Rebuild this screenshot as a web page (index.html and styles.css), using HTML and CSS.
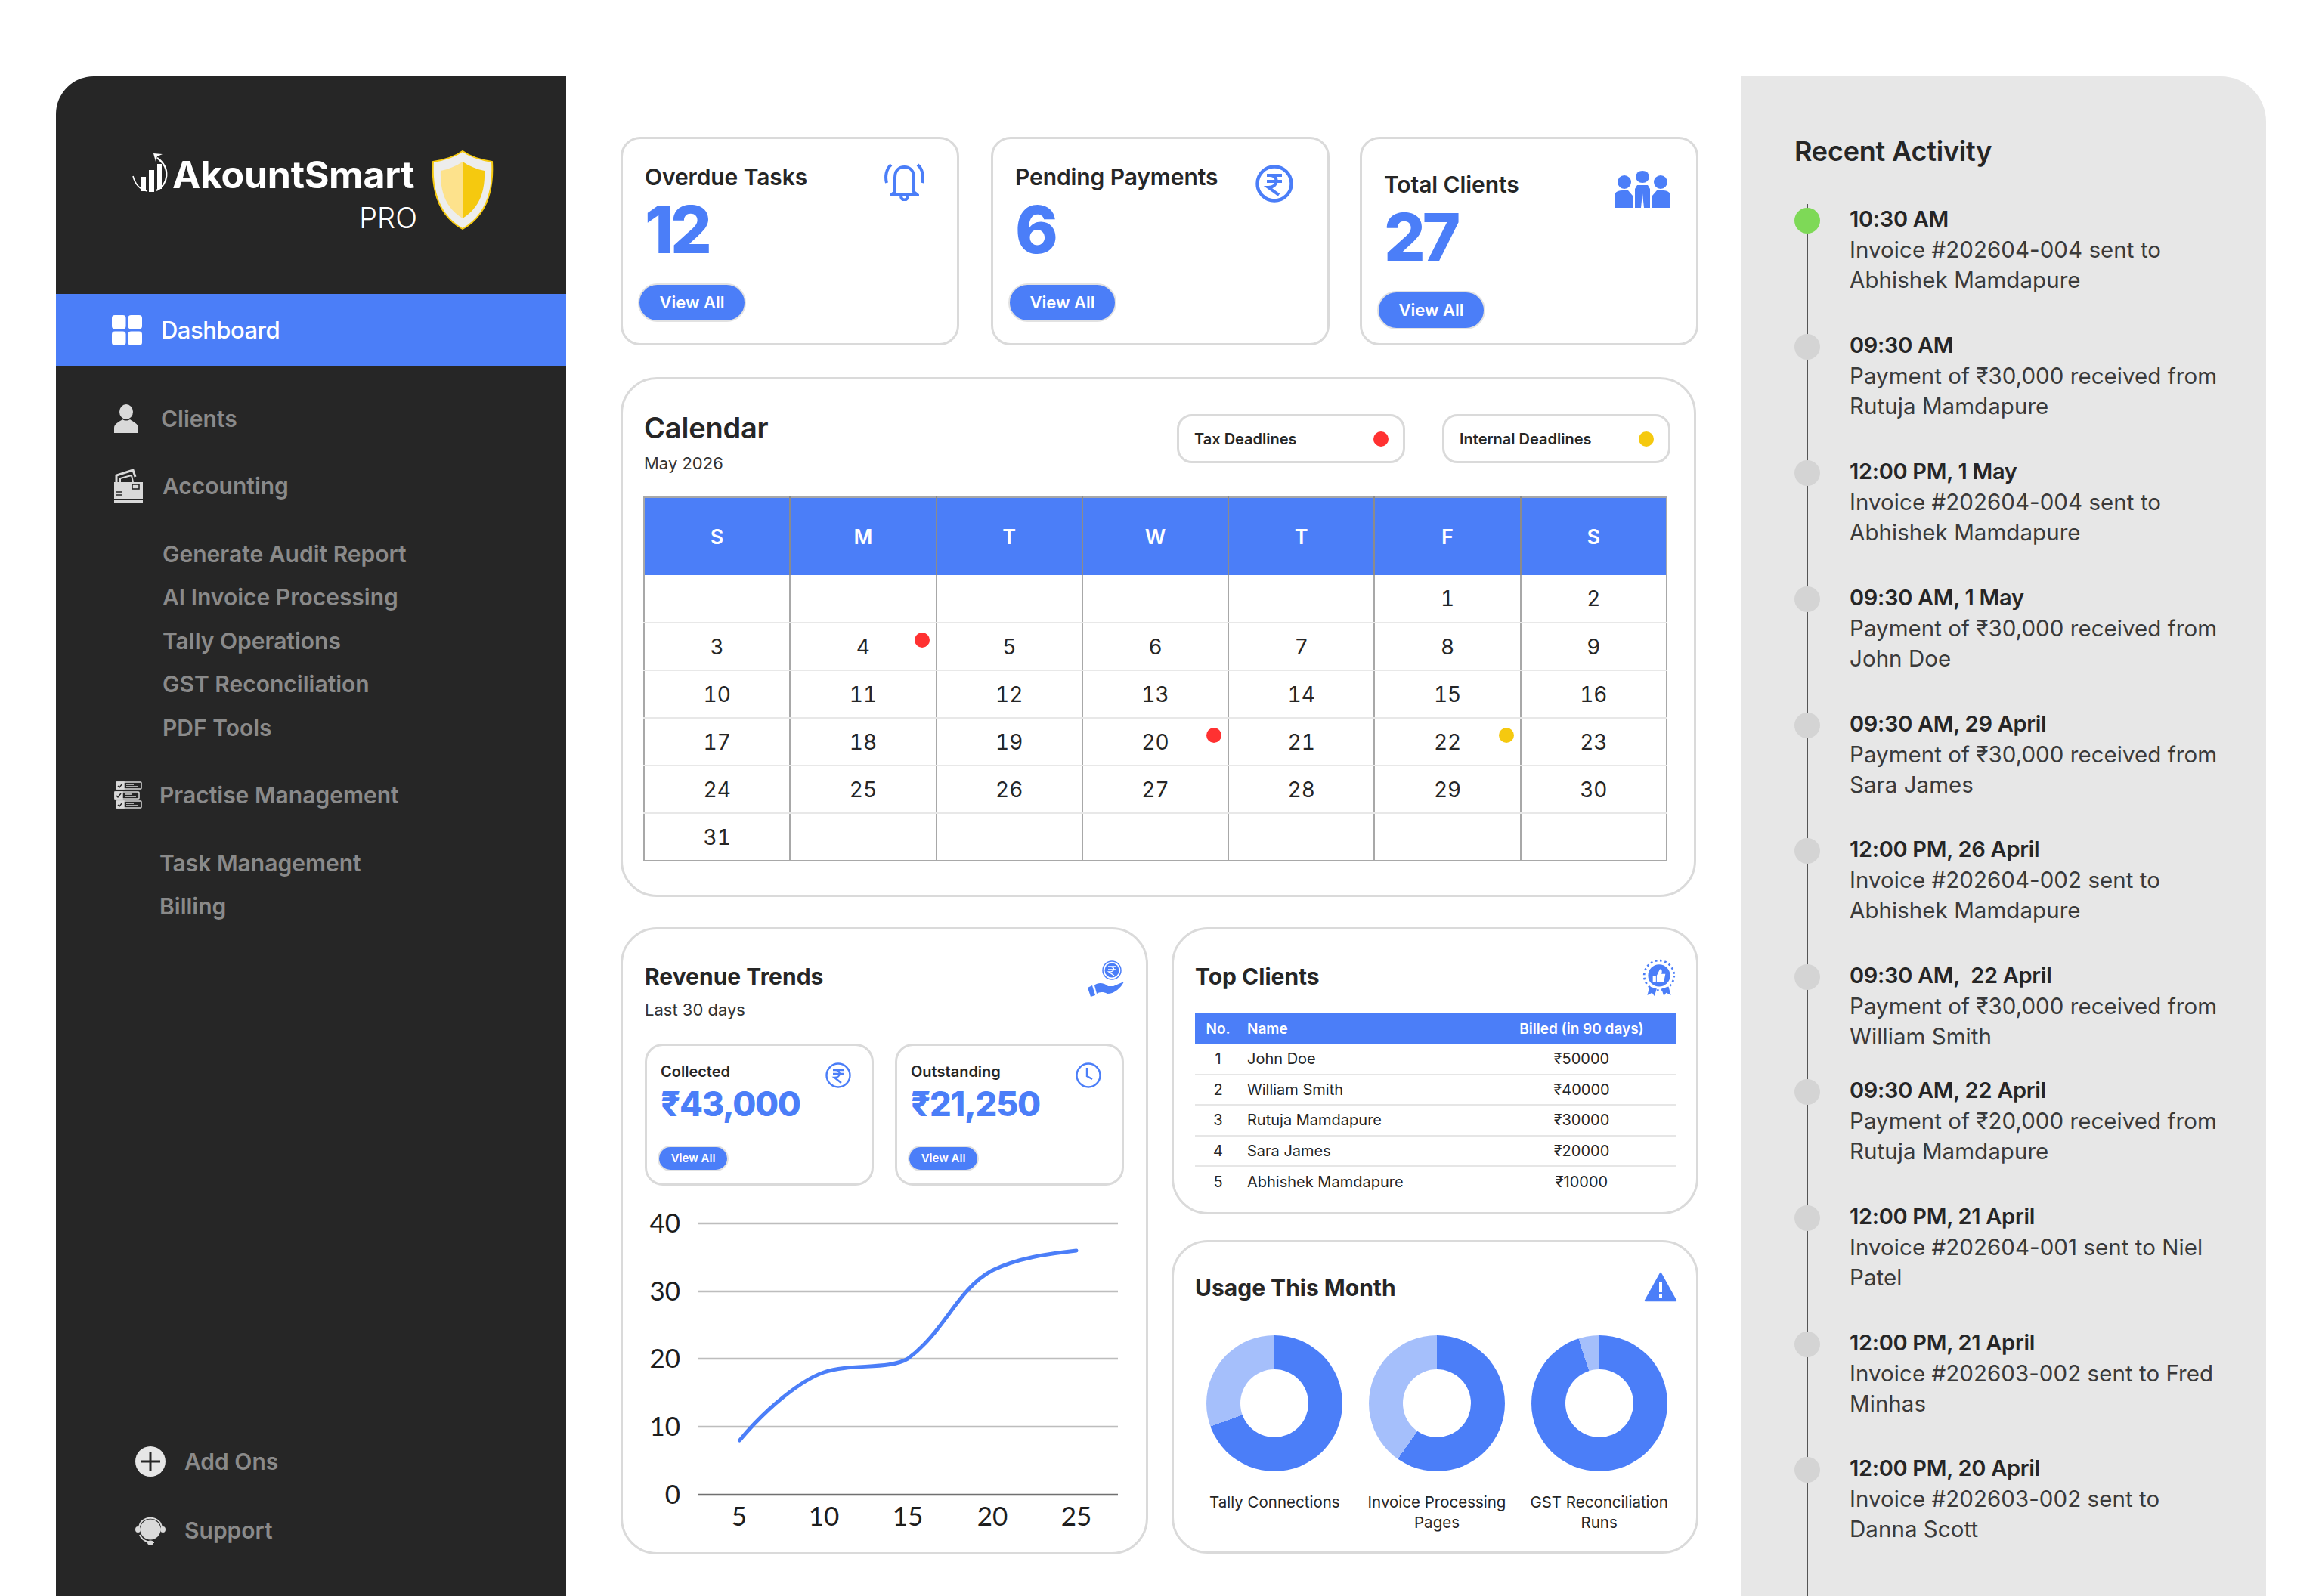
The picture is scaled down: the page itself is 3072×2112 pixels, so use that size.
FILE: index.html
```html
<!DOCTYPE html>
<html lang="en">
<head>
<meta charset="utf-8">
<title>AkountSmart PRO</title>
<link rel="stylesheet" href="styles.css">
</head>
<body>
<div class="app">
  <aside class="sidebar">
    <div class="brand">
      <svg class="brand-mark" viewBox="0 0 50 52" fill="none">
        <path d="M1 30C4 42 11 48 20 50" stroke="#fff" stroke-width="1.6"/>
        <rect x="12" y="31" width="6" height="19" fill="#fff"/><rect x="22" y="22" width="7" height="29" fill="#fff"/><rect x="33" y="14" width="6" height="33" fill="#fff"/>
        <path d="M32 49C47 42 52 20 33 6" stroke="#fff" stroke-width="2.2"/>
        <path d="M28 0L40 1L33 4L31 11Z" fill="#fff"/>
      </svg>
      <div class="brand-text">
        <div class="brand-name">AkountSmart</div>
        <div class="brand-tier">PRO</div>
      </div>
      <svg class="brand-shield" viewBox="0 0 82 105">
        <path d="M41 1C30 9 15 13 2 15C0 50 7 85 41 104C75 85 82 50 80 15C67 13 52 9 41 1Z" fill="#ededed" stroke="#f5c90f" stroke-width="2"/>
        <path d="M41 15C32 21 22 25 12 27C11 53 18 76 41 90Z" fill="#fde28c"/>
        <path d="M41 15C50 21 60 25 70 27C71 53 64 76 41 90Z" fill="#f5c90f"/>
      </svg>
    </div>
    <div class="nav-active">
      <svg class="ico-dash" viewBox="0 0 40 40" fill="#fff"><rect width="18.5" height="18.5" rx="4"/><rect x="21.5" width="18.5" height="18.5" rx="4"/><rect y="21.5" width="18.5" height="18.5" rx="4"/><rect x="21.5" y="21.5" width="18.5" height="18.5" rx="4"/></svg>
      <span>Dashboard</span>
    </div>
    <nav class="nav">
      <div class="nav-row"><svg class="ico-client" viewBox="0 0 32 38" fill="#d9d9d9"><ellipse cx="16" cy="10" rx="9" ry="10"/><path d="M0 38V31C0 26 7 23 11 20C14 22 18 22 21 20C25 23 32 26 32 31V38Z"/></svg><span>Clients</span></div>
      <div class="nav-row nav-row-acc"><svg class="ico-acc" viewBox="0 0 38 44"><path d="M3 17V8L25 1L28 10" fill="none" stroke="#d9d9d9" stroke-width="3"/><path d="M8 17V12L23 8L25 17" fill="#262626" stroke="#d9d9d9" stroke-width="2"/><rect y="17" width="38" height="22" fill="#d9d9d9"/><rect x="24" y="20" width="9" height="6" fill="#d9d9d9" stroke="#262626" stroke-width="1.6"/><path d="M3 30H11M3 34H11" stroke="#262626" stroke-width="1.6"/><rect y="41" width="38" height="3" fill="#d9d9d9"/></svg><span>Accounting</span></div>
      <div class="nav-group nav-sub">
        <div class="nav-row">Generate Audit Report</div>
        <div class="nav-row">AI Invoice Processing</div>
        <div class="nav-row">Tally Operations</div>
        <div class="nav-row">GST Reconciliation</div>
        <div class="nav-row">PDF Tools</div>
      </div>
      <div class="nav-row nav-row-pm"><svg class="ico-pm" viewBox="0 0 37 36" fill="none" stroke="#d9d9d9" stroke-width="1.5"><rect x="3" y="1" width="33" height="9" rx="1"/><rect x="1" y="14" width="32" height="9" rx="1"/><rect x="3" y="26" width="33" height="9" rx="1"/><path d="M3 1H13V10H3ZM1 14H11V23H1ZM3 26H13V35H3Z" fill="#d9d9d9"/><path d="M5 6L7 8L11 3M3 19L5 21L9 16M5 31L7 33L11 28" stroke="#262626"/><path d="M16 4H26M16 7H32M14 17H24M14 20H29M16 29H26M16 32H32"/></svg><span>Practise Management</span></div>
      <div class="nav-group nav-sub nav-sub-pm">
        <div class="nav-row">Task Management</div>
        <div class="nav-row">Billing</div>
      </div>
    </nav>
    <div class="nav-bottom">
      <div class="nav-row nav-row-end"><svg class="ico-end" viewBox="0 0 40 40"><circle cx="20" cy="20" r="20" fill="#e6e6e6"/><path d="M20 7V33M7 20H33" stroke="#262626" stroke-width="3"/></svg><span>Add Ons</span></div>
      <div class="nav-row nav-row-end"><svg class="ico-end" viewBox="0 0 40 40"><circle cx="20" cy="19" r="13.5" fill="#d9d9d9"/><path d="M5 18C5 -1 35 -1 35 18M6 26C10 36 20 36 25 36" fill="none" stroke="#d9d9d9" stroke-width="2"/><ellipse cx="3.5" cy="19" rx="3.5" ry="4" fill="#d9d9d9"/><ellipse cx="36.5" cy="19" rx="3.5" ry="4" fill="#d9d9d9"/><ellipse cx="20" cy="36.5" rx="4" ry="3" fill="#d9d9d9"/></svg><span>Support</span></div>
    </div>
  </aside>

  <main class="main">
    <section class="stats">
      <article class="card stat">
        <div class="stat-head"><h3>Overdue Tasks</h3>
          <svg class="ico-bell" viewBox="0 0 55 50" fill="none" stroke="#4b7ef8" stroke-width="4"><path d="M15 38V19C15 10 20 5 27.5 5C35 5 40 10 40 19V38L45 42H10Z" stroke-linejoin="round"/><path d="M23 44C24 50 31 50 32 44M10 2C3 8 2 18 4 26M45 2C52 8 53 18 51 26"/></svg></div>
        <div class="stat-num">12</div>
        <a class="btn">View All</a>
      </article>
      <article class="card stat">
        <div class="stat-head"><h3>Pending Payments</h3>
          <svg class="ico-rupee" viewBox="0 0 50 50" fill="none" stroke="#4b7ef8"><circle cx="25" cy="25" r="22.5" stroke-width="4.4"/><path d="M15 14H35M15 22H35M19 14C31 14 31 30 17 30L31 40" stroke-width="4"/></svg></div>
        <div class="stat-num">6</div>
        <a class="btn">View All</a>
      </article>
      <article class="card stat stat-low">
        <div class="stat-head"><h3>Total Clients</h3>
          <svg class="ico-people" viewBox="0 0 74 49" fill="#4b7ef8"><ellipse cx="37" cy="8" rx="9" ry="8"/><ellipse cx="13" cy="15" rx="9" ry="9"/><ellipse cx="61" cy="15" rx="9" ry="9"/><path d="M0 49V33C0 28 5 26 10 26H18L24 33V49ZM74 49V33C74 28 69 26 64 26H56L50 33V49ZM27 49V24L30 19H44L47 24V49H39L37 30L35 49Z"/></svg></div>
        <div class="stat-num">27</div>
        <a class="btn">View All</a>
      </article>
    </section>

    <section class="card calendar">
      <div class="cal-head">
        <div><h2>Calendar</h2><p class="muted">May 2026</p></div>
        <div class="legends">
          <div class="legend">Tax Deadlines<i class="dot dot-red"></i></div>
          <div class="legend">Internal Deadlines<i class="dot dot-yellow"></i></div>
        </div>
      </div>
      <table class="cal-table">
        <thead><tr><th>S</th><th>M</th><th>T</th><th>W</th><th>T</th><th>F</th><th>S</th></tr></thead>
        <tbody>
          <tr><td></td><td></td><td></td><td></td><td></td><td>1</td><td>2</td></tr>
          <tr><td>3</td><td>4<i class="dot dot-red cal-mark"></i></td><td>5</td><td>6</td><td>7</td><td>8</td><td>9</td></tr>
          <tr><td>10</td><td>11</td><td>12</td><td>13</td><td>14</td><td>15</td><td>16</td></tr>
          <tr><td>17</td><td>18</td><td>19</td><td>20<i class="dot dot-red cal-mark"></i></td><td>21</td><td>22<i class="dot dot-yellow cal-mark"></i></td><td>23</td></tr>
          <tr><td>24</td><td>25</td><td>26</td><td>27</td><td>28</td><td>29</td><td>30</td></tr>
          <tr><td>31</td><td></td><td></td><td></td><td></td><td></td><td></td></tr>
        </tbody>
      </table>
    </section>

    <section class="lower">
      <article class="card revenue">
        <div class="rev-head">
          <div><h2 class="h-md">Revenue Trends</h2><p class="muted">Last 30 days</p></div>
          <svg class="ico-hand" viewBox="0 0 50 48"><circle cx="32" cy="13" r="12" fill="#fff" stroke="#4b7ef8" stroke-width="1.5"/><circle cx="32" cy="13" r="9.5" fill="#4b7ef8"/><path d="M27 8H37M27 12H37M29 8C37 8 36 15 28 15L35 20" fill="none" stroke="#fff" stroke-width="1.5"/><path d="M0 36L6 33L10 46L4 48ZM9 33C14 28 22 30 27 34H34L48 28C44 36 36 44 26 44C20 41 15 42 12 44Z" fill="#4b7ef8"/></svg>
        </div>
        <div class="minis">
          <div class="mini">
            <div class="mini-head"><h4>Collected</h4><svg class="ico-mini" viewBox="0 0 34 34" fill="none" stroke="#4b7ef8"><circle cx="17" cy="17" r="15.5" stroke-width="2.4"/><path d="M10 10H24M10 15H24M13 10C21 10 21 20 12 20L21 27" stroke-width="2.4"/></svg></div>
            <div class="mini-val">₹43,000</div>
            <a class="btn btn-sm">View All</a>
          </div>
          <div class="mini">
            <div class="mini-head"><h4>Outstanding</h4><svg class="ico-mini" viewBox="0 0 34 34" fill="none" stroke="#4b7ef8" stroke-width="2.4"><circle cx="17" cy="17" r="15.5"/><path d="M15 7V18L22 22"/></svg></div>
            <div class="mini-val">₹21,250</div>
            <a class="btn btn-sm">View All</a>
          </div>
        </div>
        <svg class="chart" viewBox="850 1590 660 440">
          <g stroke="#bdbdbd" stroke-width="2.4"><path d="M922 1618H1478M922 1708H1478M922 1797H1478M922 1887H1478"/></g>
          <path d="M922 1977H1478" stroke="#707070" stroke-width="2.4"/>
          <g class="chart-txt" text-anchor="end"><text x="899" y="1630">40</text><text x="899" y="1720">30</text><text x="899" y="1809">20</text><text x="899" y="1899">10</text><text x="899" y="1989">0</text></g>
          <g class="chart-txt" text-anchor="middle"><text x="977" y="2018">5</text><text x="1089" y="2018">10</text><text x="1200" y="2018">15</text><text x="1312" y="2018">20</text><text x="1423" y="2018">25</text></g>
          <path d="M977.5 1905C1015 1860 1060 1825 1089 1815C1125 1803 1175 1812 1200 1797C1250 1760 1265 1705 1312 1680C1345 1664 1385 1658 1423 1654" fill="none" stroke="#4b7ef8" stroke-width="5" stroke-linecap="round"/>
        </svg>
      </article>
      <div class="right-col">
        <article class="card clients">
          <div class="sec-head sec-head-tbl"><h2 class="h-md">Top Clients</h2>
            <svg class="ico-badge" viewBox="0 0 48 48"><circle cx="24" cy="21" r="19" fill="none" stroke="#4b7ef8" stroke-width="2.6" stroke-dasharray="2.5 3.5"/><circle cx="24" cy="21" r="14" fill="#4b7ef8"/><path d="M16 21H20V29H16ZM21 21L25 13C28 13 28 16 27 19H32L30 29H21Z" fill="#fff"/><path d="M12 35L9 46L15 43L18 47L21 38ZM36 35L39 46L33 43L30 47L27 38Z" fill="#4b7ef8"/></svg></div>
          <table class="client-table">
            <thead><tr><th>No.</th><th>Name</th><th>Billed (in 90 days)</th></tr></thead>
            <tbody>
              <tr><td>1</td><td>John Doe</td><td>₹50000</td></tr>
              <tr><td>2</td><td>William Smith</td><td>₹40000</td></tr>
              <tr><td>3</td><td>Rutuja Mamdapure</td><td>₹30000</td></tr>
              <tr><td>4</td><td>Sara James</td><td>₹20000</td></tr>
              <tr><td>5</td><td>Abhishek Mamdapure</td><td>₹10000</td></tr>
            </tbody>
          </table>
        </article>
        <article class="card usage">
          <div class="sec-head"><h2 class="h-md">Usage This Month</h2>
            <svg class="ico-warn" viewBox="0 0 44 40"><path d="M22 2L42 38H2Z" fill="#4b7ef8" stroke="#4b7ef8" stroke-width="2.5" stroke-linejoin="round"/><path d="M22 13V27M22 30V35" stroke="#fff" stroke-width="4"/></svg></div>
          <div class="donuts">
            <figure class="donut-item"><div class="donut" style="--p:250deg"></div><figcaption>Tally Connections</figcaption></figure>
            <figure class="donut-item"><div class="donut" style="--p:215deg"></div><figcaption>Invoice Processing Pages</figcaption></figure>
            <figure class="donut-item"><div class="donut" style="--p:342deg"></div><figcaption>GST Reconciliation Runs</figcaption></figure>
          </div>
        </article>
      </div>
    </section>
  </main>

  <aside class="activity">
    <h2 class="act-title">Recent Activity</h2>
    <ul class="act-list">
      <li class="act-item act-now"><b>10:30 AM</b>Invoice #202604-004 sent to<br>Abhishek Mamdapure</li>
      <li class="act-item"><b>09:30 AM</b>Payment of ₹30,000 received from<br>Rutuja Mamdapure</li>
      <li class="act-item"><b>12:00 PM, 1 May</b>Invoice #202604-004 sent to<br>Abhishek Mamdapure</li>
      <li class="act-item"><b>09:30 AM, 1 May</b>Payment of ₹30,000 received from<br>John Doe</li>
      <li class="act-item"><b>09:30 AM, 29 April</b>Payment of ₹30,000 received from<br>Sara James</li>
      <li class="act-item"><b>12:00 PM, 26 April</b>Invoice #202604-002 sent to<br>Abhishek Mamdapure</li>
      <li class="act-item act-tight"><b>09:30 AM,&nbsp; 22 April</b>Payment of ₹30,000 received from<br>William Smith</li>
      <li class="act-item"><b>09:30 AM, 22 April</b>Payment of ₹20,000 received from<br>Rutuja Mamdapure</li>
      <li class="act-item"><b>12:00 PM, 21 April</b>Invoice #202604-001 sent to Niel<br>Patel</li>
      <li class="act-item"><b>12:00 PM, 21 April</b>Invoice #202603-002 sent to Fred<br>Minhas</li>
      <li class="act-item"><b>12:00 PM, 20 April</b>Invoice #202603-002 sent to<br>Danna Scott</li>
    </ul>
  </aside>
</div>
</body>
</html>
```
FILE: styles.css
```css
* { box-sizing: border-box; }
html, body { margin: 0; padding: 0; background: #fff; }
body { font-family: Inter, "Noto Sans", sans-serif; color: #262626; }
h2, h3, h4, p, ul, figure { margin: 0; padding: 0; }
svg { display: block; flex: none; }

.app { width: 3072px; height: 2112px; padding: 101px 74px 0; display: flex; overflow: hidden; }

/* sidebar */
.sidebar { width: 675px; flex: none; background: #262626; border-radius: 50px 0 0 0; display: flex; flex-direction: column; color: #8a8a8a; font-weight: 600; font-size: 30px; }
.brand { height: 288px; padding: 98px 0 0 101px; display: flex; align-items: flex-start; }
.brand-mark { width: 50px; height: 52px; margin: 4px 3px 0 0; }
.brand-text { width: 324px; text-align: right; color: #fff; padding-top: 2px; }
.brand-name { font-size: 50px; font-weight: 700; line-height: 60px; letter-spacing: -0.3px; text-align: left; }
.brand-tier { font-size: 38px; font-weight: 300; line-height: 50px; margin-top: 2px; }
.brand-shield { width: 82px; height: 105px; margin-left: 19px; }
.nav-active { height: 95px; background: #4b7ef8; color: #fff; display: flex; align-items: center; padding-left: 74px; font-weight: 500; font-size: 31px; letter-spacing: -0.5px; }
.ico-dash { width: 40px; height: 40px; margin-right: 25px; }
.nav { margin-top: 41px; display: flex; flex-direction: column; gap: 32px; }
.nav-group { display: flex; flex-direction: column; }
.nav-row { height: 57.5px; display: flex; align-items: center; padding-left: 77px; }
.nav-sub .nav-row { padding-left: 141px; }
.nav-sub-pm .nav-row { padding-left: 137px; }
.ico-client { width: 32px; height: 38px; margin-right: 30px; }
.ico-acc { width: 38px; height: 44px; margin-right: 26px; }
.ico-pm { width: 37px; height: 36px; margin-right: 23px; }
.nav-bottom { margin-top: auto; padding-bottom: 58px; display: flex; flex-direction: column; gap: 34px; }
.nav-row-end { padding-left: 105px; }
.ico-end { width: 40px; height: 40px; margin-right: 25px; }

/* cards */
.main { width: 1426px; flex: none; margin-left: 72px; padding-top: 80px; display: flex; flex-direction: column; gap: 42px; }
.card { background: #fff; border: 3px solid #dadada; border-radius: 48px; }
.stats { display: flex; gap: 42px; }
.stat { width: 448px; height: 276px; border-radius: 26px; padding: 32px 44px 28px 29px; display: flex; flex-direction: column; align-items: flex-start; }
.stat-low { padding-top: 42px; padding-bottom: 18px; margin-left: -2px; }
.stat-head { width: 100%; height: 36px; display: flex; justify-content: space-between; align-items: flex-start; }
.stat-head h3 { font-size: 30px; font-weight: 600; line-height: 36px; letter-spacing: -0.1px; }
.stat-num { color: #4b7ef8; font-size: 86px; line-height: 92px; font-weight: 800; letter-spacing: -4px; margin-top: 6px; }
.ico-bell { width: 55px; height: 50px; margin: 0 -2px 0 0; }
.ico-rupee { width: 50px; height: 50px; margin: 2px 1px 0 0; }
.ico-people { width: 74px; height: 49px; margin-right: -10px; }
.btn { display: inline-block; width: 143px; height: 51px; line-height: 47px; margin: auto 0 0 -9px; background: #4b7ef8; color: #fff; border: 2px solid #e2e2e2; border-radius: 26px; text-align: center; font-size: 22px; font-weight: 600; }
.btn-sm { width: 94px; height: 34px; line-height: 29px; font-size: 15px; margin-left: -4px; }

/* calendar */
.calendar { height: 688px; padding: 41px 35px 0 27px; display: flex; flex-direction: column; margin-right: 3px; }
.cal-head { height: 114px; display: flex; justify-content: space-between; padding-left: 1px; }
h2 { font-size: 38px; line-height: 46px; font-weight: 600; letter-spacing: -0.2px; }
.muted { font-size: 22px; line-height: 30px; font-weight: 400; margin-top: 9px; color: #333; }
.legends { display: flex; gap: 49px; padding-top: 5px; margin-right: -4px; }
.legend { width: 302px; height: 65px; border: 3px solid #dadada; border-radius: 20px; display: flex; align-items: center; justify-content: space-between; padding: 0 19px 0 20px; font-size: 20px; font-weight: 600; }
.dot { display: block; width: 20px; height: 20px; border-radius: 50%; }
.dot-red { background: #ff3131; }
.dot-yellow { background: #f5c90f; }
.cal-table { width: 1355px; border-collapse: collapse; table-layout: fixed; border: 2px solid #a8a8a8; font-variant-numeric: tabular-nums; }
.cal-table th { height: 103px; background: #4b7ef8; color: #fff; font-size: 27px; font-weight: 600; border-right: 2px solid #8b8b8b; }
.cal-table td { position: relative; height: 63px; text-align: center; font-size: 28px; font-weight: 400; padding: 0; border-right: 2px solid #a8a8a8; border-bottom: 2px solid #e8e8e8; }
.cal-table tr:last-child td { border-bottom: 0; }
.cal-table th:last-child, .cal-table td:last-child { border-right: 0; }
.cal-mark { position: absolute; top: 12px; right: 8px; }

/* lower */
.lower { display: flex; justify-content: space-between; margin-top: -2px; }
.revenue { width: 698px; height: 830px; padding: 43px 29px 0 29px; }
.rev-head { display: flex; justify-content: space-between; height: 108px; }
.h-md { font-size: 30px; line-height: 38px; font-weight: 700; letter-spacing: 0; }
.revenue .muted { margin-top: 10px; }
.ico-hand { width: 52px; height: 48px; margin: -2px -3px 0 0; }
.minis { display: flex; justify-content: space-between; }
.mini { width: 303px; height: 188px; border: 3px solid #dadada; border-radius: 24px; padding: 22px 27px 0 18px; }
.mini-head { display: flex; justify-content: space-between; height: 24px; }
.mini-head h4 { font-size: 20px; line-height: 24px; font-weight: 600; }
.ico-mini { width: 34px; height: 34px; margin-top: 0; }
.mini-val { color: #4b7ef8; font-size: 45px; line-height: 52px; font-weight: 800; letter-spacing: -1.3px; margin-top: 5px; }
.mini .btn { margin-top: 29px; display: block; }
.chart { width: 660px; height: 440px; margin: 22px 0 0 -2px; }
.chart-txt { font-family: Lato, sans-serif; font-size: 35px; fill: #1d1d1d; }

.right-col { width: 697px; display: flex; flex-direction: column; gap: 34px; }
.clients { height: 380px; padding: 43px 27px 0 28px; }
.usage { height: 415px; padding: 41px 27px 0 28px; }
.sec-head { display: flex; justify-content: space-between; height: 72px; }
.sec-head-tbl { height: 68px; }
.ico-badge { width: 50px; height: 50px; margin: -4px -3px 0 0; }
.ico-warn { width: 46px; height: 40px; margin: -2px -3px 0 0; }
.client-table { width: 636px; border-collapse: collapse; table-layout: fixed; font-size: 20px; }
.client-table th { height: 40px; background: #4b7ef8; color: #fff; font-weight: 600; font-size: 19px; }
.client-table th:nth-child(1) { width: 61px; }
.client-table th:nth-child(2) { width: 326px; text-align: left; padding-left: 8px; }
.client-table td { height: 40.5px; text-align: center; padding: 0; border-bottom: 2px solid #e6e6e6; }
.client-table td:nth-child(2) { text-align: left; padding-left: 8px; }
.client-table tr:last-child td { border-bottom: 0; }
.donuts { display: flex; justify-content: space-between; padding: 10px 0 0; margin: 0 -6px 0 -2px; }
.donut-item { width: 215px; display: flex; flex-direction: column; align-items: center; text-align: center; font-size: 20.5px; line-height: 27px; }
.donut { position: relative; width: 180px; height: 180px; border-radius: 50%; background: conic-gradient(#4b7ef8 0 var(--p), #a5bffb var(--p) 360deg); }
.donut::after { content: ""; position: absolute; inset: 45px; background: #fff; border-radius: 50%; }
.donut-item figcaption { margin-top: 27px; }

/* activity */
.activity { width: 694px; flex: none; margin-left: 57px; background: #e7e7e7; border-radius: 0 60px 0 0; padding: 76px 0 0 70px; }
.act-title { font-size: 36px; line-height: 46px; font-weight: 600; }
.act-list { list-style: none; position: relative; margin-top: 47px; display: flex; flex-direction: column; gap: 46.9px; }
.act-list::before { content: ""; position: absolute; left: 16px; top: 0; width: 2px; height: 1900px; background: #555; }
.act-item { position: relative; padding-left: 73px; font-size: 29.5px; line-height: 40px; color: #3a3a3a; letter-spacing: 0.05px; }
.act-item b { display: block; font-weight: 600; font-size: 29px; letter-spacing: -0.3px; color: #262626; }
.act-item::before { content: ""; position: absolute; left: 0; top: 5px; width: 34px; height: 34px; border-radius: 50%; background: #d4d4d4; }
.act-now::before { background: #7ed957; }
.act-tight { margin-bottom: -15.5px; }
```
